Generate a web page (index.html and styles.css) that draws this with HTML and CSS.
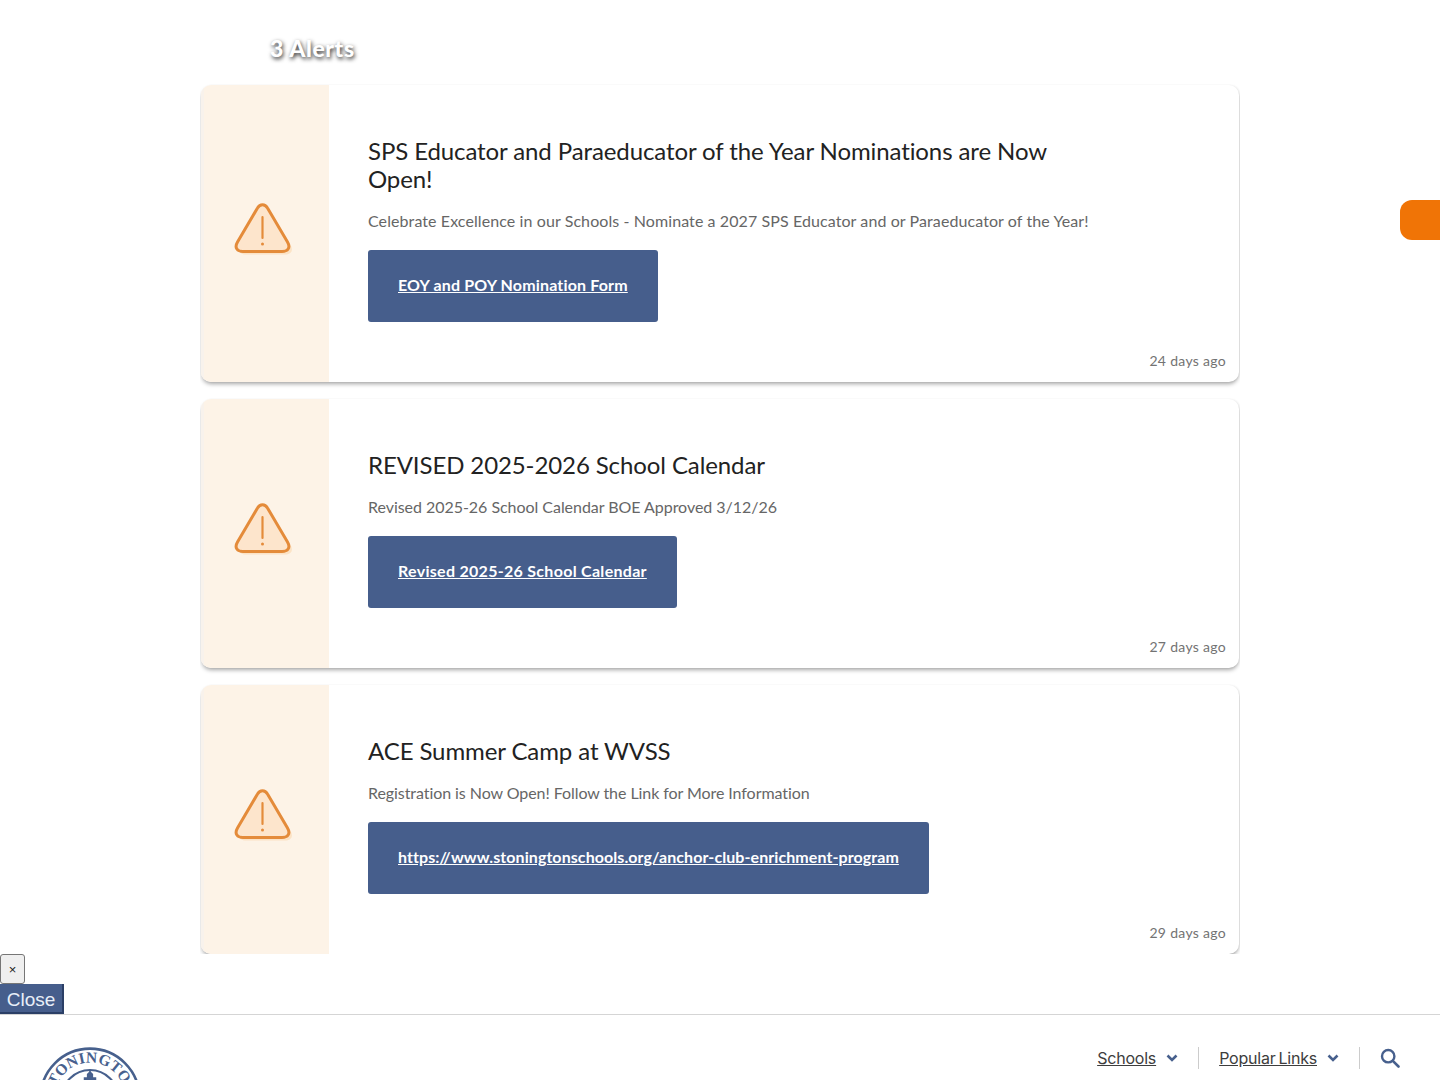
FILE: index.html
```html
<!DOCTYPE html>
<html lang="en">
<head>
    <meta charset="UTF-8">
    <meta name="viewport" content="width=device-width, initial-scale=1.0">
    <title>Stonington Public Schools</title>
    <link rel="stylesheet" href="styles.css">
</head>
<body>
    <svg class="icon-defs" width="0" height="0" aria-hidden="true">
        <symbol id="alertIcon" viewBox="0 0 64 60">
            <path d="M25.500 7 C28 2.500 33 2.500 35.500 7 L55.500 41 C59 47 55.500 50.500 50 50.500 L11 50.500 C5.500 50.500 2 47 5.500 41 Z" fill="#fbdcb8" transform="translate(3 3)" opacity=".7"/>
            <path d="M25.500 7 C28 2.500 33 2.500 35.500 7 L55.500 41 C59 47 55.500 50.500 50 50.500 L11 50.500 C5.500 50.500 2 47 5.500 41 Z" fill="#fde5cc" stroke="#e48b3a" stroke-width="3" stroke-linejoin="round"/>
            <path d="M30.500 16 L30.500 37" stroke="#e48b3a" stroke-width="2.200" stroke-linecap="round"/>
            <circle cx="30.500" cy="43" r="1.500" fill="#e48b3a"/>
        </symbol>
    </svg>

    <div class="side-tab"></div>

    <main class="alerts">
        <h2 class="alerts-title">3 Alerts</h2>

        <article class="alert">
            <div class="alert-side"><svg class="alert-icon"><use href="#alertIcon"/></svg></div>
            <div class="alert-body">
                <h3>SPS Educator and Paraeducator of the Year Nominations are Now Open!</h3>
                <p>Celebrate Excellence in our Schools - Nominate a 2027 SPS Educator and or Paraeducator of the Year!</p>
                <a class="alert-btn" href="#">EOY and POY Nomination Form</a>
                <span class="alert-age">24 days ago</span>
            </div>
        </article>

        <article class="alert alert-calendar">
            <div class="alert-side"><svg class="alert-icon"><use href="#alertIcon"/></svg></div>
            <div class="alert-body">
                <h3>REVISED 2025-2026 School Calendar</h3>
                <p>Revised 2025-26 School Calendar BOE Approved 3/12/26</p>
                <a class="alert-btn" href="#">Revised 2025-26 School Calendar</a>
                <span class="alert-age">27 days ago</span>
            </div>
        </article>

        <article class="alert alert-camp">
            <div class="alert-side"><svg class="alert-icon"><use href="#alertIcon"/></svg></div>
            <div class="alert-body">
                <h3>ACE Summer Camp at WVSS</h3>
                <p>Registration is Now Open! Follow the Link for More Information</p>
                <a class="alert-btn" href="#">https://www.stoningtonschools.org/anchor-club-enrichment-program</a>
                <span class="alert-age">29 days ago</span>
            </div>
        </article>
    </main>

    <div class="close-area">
        <button class="close-x">×</button>
        <button class="close-btn">Close</button>
    </div>

    <header class="site-header">
        <svg class="logo" viewBox="0 0 100 100" aria-label="Stonington Public Schools seal">
            <circle cx="50" cy="50" r="47.500" fill="#fff" stroke="#47608d" stroke-width="2.500"/>
            <circle cx="50" cy="50" r="27" fill="none" stroke="#47608d" stroke-width="2"/>
            <path id="sealArc" d="M50 84 A34 34 0 1 1 50.010 84" fill="none"/>
            <text class="logo-text"><textPath href="#sealArc" startOffset="50%" text-anchor="middle">STONINGTON</textPath></text>
            <path d="M50 22 L51 25 L53 27 L53 30 L56 30 L56 36 L44 36 L44 30 L47 30 L47 27 L49 25 Z" fill="#47608d"/>
        </svg>
        <nav class="top-nav">
            <a href="#">Schools</a>
            <svg class="chev" viewBox="0 0 12 8"><path d="M1.500 1.500 L6 6 L10.500 1.500" fill="none" stroke="#47608d" stroke-width="2.600"/></svg>
            <span class="nav-sep"></span>
            <a href="#">Popular Links</a>
            <svg class="chev" viewBox="0 0 12 8"><path d="M1.500 1.500 L6 6 L10.500 1.500" fill="none" stroke="#47608d" stroke-width="2.600"/></svg>
            <span class="nav-sep"></span>
            <svg class="search" viewBox="0 0 20 20"><circle cx="8.200" cy="8.200" r="6.200" fill="none" stroke="#47608d" stroke-width="2.400"/><path d="M12.800 12.800 L18.500 18.500" stroke="#47608d" stroke-width="2.600" stroke-linecap="round"/></svg>
        </nav>
    </header>
</body>
</html>
```

FILE: styles.css
```css
html, body {
    margin: 0;
    padding: 0;
    height: 1080px;
    overflow: hidden;
    background: #fff;
}
body {
    font-family: "Lato", "Open Sans", sans-serif;
    color: #222;
}
.icon-defs {
    position: absolute;
}
.side-tab {
    position: absolute;
    top: 200px;
    right: 0;
    width: 40px;
    height: 40px;
    background: #f07406;
    border-radius: 12px 0 0 12px;
}
.alerts {
    width: 1040px;
    margin-left: 200px;
    height: 954px;
    overflow: hidden;
}
.alerts-title {
    margin: 0;
    padding: 35px 0 0 70px;
    height: 50px;
    font-size: 23px;
    line-height: 26px;
    font-weight: 900;
    letter-spacing: .6px;
    color: #fff;
    text-shadow: 1px 2px 4px rgba(0,0,0,0.85);
}
.alert {
    display: flex;
    margin: 0 1px 17px;
    background: #fff;
    border-radius: 10px;
    box-shadow: 0 3px 4px -1px rgba(0,0,0,0.35), 1px 0 2px rgba(0,0,0,0.07);
    overflow: hidden;
}
.alert-side {
    flex: 0 0 128px;
    display: flex;
    align-items: center;
    justify-content: center;
    background: #fdf3e7;
    border-left: 3px solid #f8f2ec;
    box-sizing: border-box;
}
.alert-icon {
    width: 64px;
    height: 60px;
    margin: 0 6px 6px 0;
}
.alert-body {
    position: relative;
    flex: 1;
    padding: 52px 130px 60px 39px;
}
.alert-body h3 {
    margin: 0;
    font-size: 24px;
    line-height: 28px;
    font-weight: 400;
    letter-spacing: -.1px;
    color: #222;
}
.alert-body p {
    margin: 16px 0 17px;
    font-size: 16px;
    line-height: 24px;
    letter-spacing: .09px;
    color: #666;
    white-space: nowrap;
}
.alert-btn {
    display: inline-block;
    padding: 23px 30px 25px;
    font-size: 16px;
    line-height: 24px;
    font-weight: 700;
    letter-spacing: .16px;
    color: #fff;
    background: #465e8c;
    border-radius: 3px;
    white-space: nowrap;
}
.alert-calendar p {
    letter-spacing: -.04px;
}
.alert-calendar .alert-btn {
    letter-spacing: .29px;
}
.alert-camp p {
    letter-spacing: -.07px;
}
.alert-camp .alert-btn {
    letter-spacing: .08px;
}
.alert-age {
    position: absolute;
    right: 13px;
    bottom: 12px;
    font-size: 14px;
    line-height: 18px;
    letter-spacing: .3px;
    color: #737373;
}
.close-area {
    height: 60px;
}
.close-x {
    display: block;
    width: 25px;
    height: 30px;
    padding: 0;
    font-family: "Liberation Sans", sans-serif;
    font-size: 13px;
    color: #222;
    background: #efefef;
    border: 1px solid #767676;
    border-radius: 3px;
}
.close-btn {
    display: block;
    width: 64px;
    height: 30px;
    padding: 3px 0 0;
    font-family: "Liberation Sans", sans-serif;
    font-size: 19px;
    color: #e8eef8;
    background: #465e8c;
    border: none;
    border-right: 2px solid #2b3f66;
    border-bottom: 2px solid #2b3f66;
}
.site-header {
    display: flex;
    justify-content: space-between;
    height: 66px;
    border-top: 1px solid #d5d5d5;
    overflow: hidden;
}
.logo {
    width: 104px;
    height: 104px;
    margin: 31px 0 0 38px;
    flex: none;
}
.logo-text {
    font-family: "Liberation Serif", serif;
    font-size: 15px;
    font-weight: 700;
    fill: #47608d;
}
.top-nav {
    display: flex;
    align-items: center;
    height: 22px;
    margin: 32px 40px 0 0;
}
.top-nav a {
    font-family: "Inter", sans-serif;
    font-size: 16px;
    line-height: 22px;
    letter-spacing: -.2px;
    word-spacing: -1.5px;
    color: #3d3d3d;
}
.chev {
    width: 12px;
    height: 8px;
    margin-left: 10px;
}
.nav-sep {
    width: 1px;
    height: 22px;
    background: #ccc;
    margin: 0 20px;
}
.search {
    width: 20px;
    height: 20px;
}
```
